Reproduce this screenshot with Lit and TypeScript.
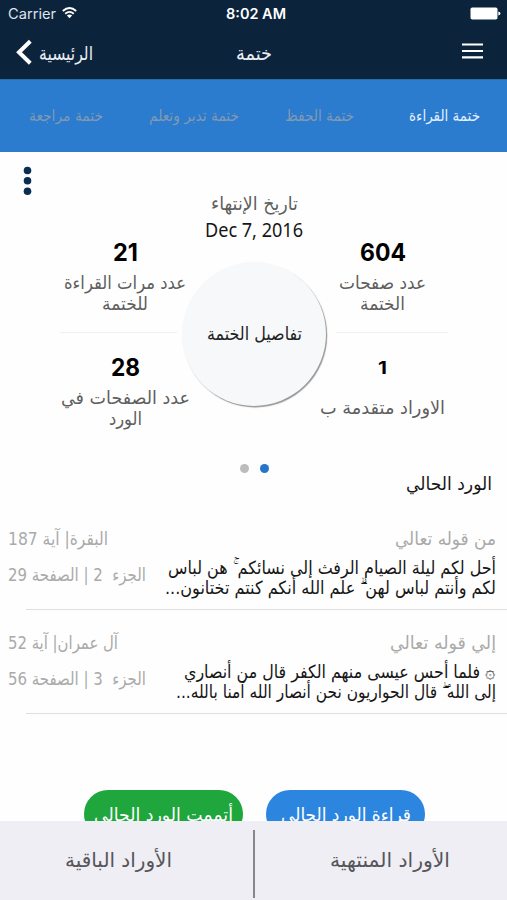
import { LitElement, html, css, svg } from "lit";
import { customElement, property } from "lit/decorators.js";

/* One line of text set to an exact width. Box is 20px high, baseline at 15px. */
@customElement("fit-line")
class FitLine extends LitElement {
  @property() text = "";
  @property({ type: Number }) w = 100;
  static styles = css`
    :host { display: block; flex: none; height: 20px; }
    svg { display: block; overflow: visible; }
    text { fill: currentColor; white-space: pre; }
  `;
  render() {
    const rtl = /[\u0600-\u06ff]/.test(this.text);
    return html`<svg width=${this.w} height="20">${svg`<text x=${this.w / 2} y="15" text-anchor="middle"
      direction=${rtl ? "rtl" : "ltr"} textLength=${this.w} lengthAdjust="spacingAndGlyphs">${this.text}</text>`}</svg>`;
  }
}

const line = (text: string, w: number, cls = "") =>
  html`<fit-line class=${cls} .text=${text} .w=${w}></fit-line>`;

interface Passage {
  label: [string, number];
  verse: [string, number];
  body: [string, number][];
  place: [string, number];
}

const passages: Passage[] = [
  {
    label: ["من قوله تعالي", 101],
    verse: ["البقرة| آية 187", 100],
    body: [
      ["أحل لكم ليلة الصيام الرفث إلى نسائكم ۚ هن لباس", 328],
      ["لكم وأنتم لباس لهن ۗ علم الله أنكم كنتم تختانون...", 331],
    ],
    place: ["الجزء  2 | الصفحة 29", 138],
  },
  {
    label: ["إلي قوله تعالي", 106],
    verse: ["آل عمران| آية 52", 110],
    body: [
      ["۞ فلما أحس عيسى منهم الكفر قال من أنصاري", 312],
      ["إلى الله ۖ قال الحواريون نحن أنصار الله آمنا بالله...", 320],
    ],
    place: ["الجزء  3 | الصفحة 56", 138],
  },
];

@customElement("app-root")
class AppRoot extends LitElement {
  static styles = css`
    :host {
      display: flex; flex-direction: column; width: 507px; height: 900px; overflow: hidden;
      background: #fefefe; color: #161616;
      font: 18px "DejaVu Sans Condensed", "DejaVu Sans", sans-serif;
    }
    * { box-sizing: border-box; }
    .top { height: 79px; background: #0c233c; color: #fff; flex: none; }
    .status { display: grid; grid-template-columns: 1fr auto 1fr; padding: 4px 4px 0 8px; height: 28px; font: 14px Inter, sans-serif; }
    .carrier { display: flex; gap: 6px; color: #dfe5ec; }
    .wifi { margin-top: 3px; }
    .clock { font-weight: 600; }
    .battery { justify-self: end; margin-top: 2px; }
    .nav { display: grid; grid-template-columns: 1fr auto 1fr; padding: 10px 24px 0 15px; color: #e9eef5; font-size: 19px; }
    .back { display: flex; gap: 7px; }
    .back fit-line, .title { margin-top: 7px; }
    .title { margin-left: 9px; }
    .menu { justify-self: end; margin-top: 4px; }
    .tabs { height: 73px; background: #2b7bce; border-top: 1px solid #2b6bad; padding: 26px 27px 0 28px; display: flex; gap: 46px; direction: rtl; color: #8199b2; font-size: 15.5px; flex: none; }
    .tabs .on { color: #e3f0ff; margin-inline-end: 9px; }
    .summary { height: 322px; position: relative; display: grid; grid-template-columns: 130px 128px 125px; padding: 43px 0 0 60px; flex: none; }
    .dots { position: absolute; left: 23px; top: 14px; }
    .col { display: flex; flex-direction: column; align-items: center; color: #5f5f5f; }
    .num { color: #000; font: 700 24px Inter, sans-serif; }
    .one { font-size: 17px; }
    .col .top-num { margin-top: 51px; }
    .l1 { margin-top: 8px; }
    .l2 { margin-top: 1px; }
    .rule { height: 1px; background: #f0f0f0; margin: 17px 0 0; width: 117px; align-self: flex-start; }
    .right { margin-left: 2px; width: 125px; }
    .right .rule { width: 112px; margin-left: 16px; }
    .left .low { margin-top: 28px; }
    .right .low { margin-top: 26px; }
    .right .advance { margin-top: 20px; }
    .mid { font-size: 19px; }
    .date { margin-top: 7px; color: #161616; font: 19px "Noto Sans", sans-serif; }
    .disc { width: 144px; height: 144px; border-radius: 50%; background: #f7f8fa; box-shadow: 1.2px 1.4px 1px #999; margin: 20px 0 0; display: flex; justify-content: center; padding-top: 63px; color: #222; font-size: 18px; flex: none; }
    .pager { height: 0; display: flex; justify-content: center; gap: 11px; padding-left: 1px; }
    .pager i { width: 9px; height: 9px; border-radius: 50%; background: #bcbcbc; margin-top: -10.5px; flex: none; }
    .pager i.on { background: #2575cb; }
    .heading { display: flex; justify-content: flex-end; margin: 1px 15px 0 0; }
    .list { margin-top: 35px; }
    .row { height: 104px; padding: 0 11px 0 8px; display: grid; grid-template-columns: 138px 1fr; grid-template-rows: 89px 1px; color: #aaa; }
    .row::after { content: ""; height: 1px; background: #dfdfdf; margin: -10px -11px 0 18px; grid-column: 1 / 3; }
    .right-side { display: flex; flex-direction: column; align-items: flex-end; }
    .place { margin-top: 16px; }
    .b0 { margin-top: 9px; color: #161616; }
    .b1 { margin-top: 0; color: #161616; }
    .actions { display: flex; gap: 23px; padding-left: 84px; margin-top: 52px; height: 31px; overflow: hidden; color: #fff; flex: none; }
    .pill { width: 159px; height: 48px; border-radius: 24px; padding-top: 16px; display: flex; justify-content: center; background: #2c86e0; flex: none; }
    .green { background: #1fa63c; }
    .foot { flex: 1; background: #efeef4; color: #55555b; font-size: 20px; display: flex; }
    .left-foot { margin: 31px 81px 0 65px; }
    .bar { width: 2px; height: 68px; margin-top: 9px; background: #88888c; }
    .right-foot { margin: 31px 0 0 75px; }
  `;

  render() {
    return html`
      <header class="top">
        <div class="status">
          <div class="carrier">${line("Carrier", 48)}
            <svg class="wifi" width="15" height="12" viewBox="0 0 15 12" fill="none" stroke="#fff" stroke-width="1.8">
              <path d="M.8 4Q7.5-2 14.2 4M3.2 6.7Q7.5 3 11.8 6.7" />
              <path d="M4.9 8.6Q7.5 6.5 10.1 8.6L7.5 11.3Z" fill="#fff" stroke="none" />
            </svg>
          </div>
          ${line("8:02 AM", 60, "clock")}
          <svg class="battery" width="33" height="14" viewBox="0 0 33 14" fill="#fff">
            <rect x=".5" y="1.5" width="27" height="12" rx="1.8" />
            <path d="M28.3 5.5Q30.5 6 30.5 7.5T28.3 9.5Z" />
          </svg>
        </div>
        <div class="nav">
          <div class="back">
            <svg width="17" height="28" viewBox="0 0 17 28" fill="none" stroke="#fff" stroke-width="4"><path d="M15.3 3.2 4 14.3 15.3 25.2" /></svg>
            ${line("الرئيسية", 54)}
          </div>
          ${line("ختمة", 36, "title")}
          <svg class="menu" width="21" height="18" viewBox="0 0 21 18" stroke="#fff" stroke-width="2.2"><path d="M0 2.5H21M0 9H21M0 15.3H21" /></svg>
        </div>
      </header>
      <nav class="tabs">
        ${line("ختمة القراءة", 71, "on")}
        ${line("ختمة الحفظ", 69)}
        ${line("ختمة تدبر وتعلم", 90)}
        ${line("ختمة مراجعة", 74)}
      </nav>
      <section class="summary">
        <svg class="dots" width="9" height="30" fill="#0b2d50"><circle cx="4.5" cy="4.5" r="3.8" /><circle cx="4.5" cy="14.8" r="3.8" /><circle cx="4.5" cy="25.2" r="3.8" /></svg>
        <div class="col left">
          ${line("21", 25, "num top-num")}
          ${line("عدد مرات القراءة", 122, "l1")}
          ${line("للختمة", 46, "l2")}
          <div class="rule"></div>
          ${line("28", 29, "num low")}
          ${line("عدد الصفحات في", 129, "l1")}
          ${line("الورد", 33, "l2")}
        </div>
        <div class="col mid">
          ${line("تاريخ الإنتهاء", 87)}
          ${line("Dec 7, 2016", 98, "date")}
          <div class="disc">${line("تفاصيل الختمة", 95)}</div>
        </div>
        <div class="col right">
          ${line("604", 46, "num top-num")}
          ${line("عدد صفحات", 87, "l1")}
          ${line("الختمة", 45, "l2")}
          <div class="rule"></div>
          ${line("1", 9, "num one low")}
          ${line("الاوراد متقدمة ب", 125, "advance")}
        </div>
      </section>
      <div class="pager"><i></i><i class="on"></i></div>
      <div class="heading">${line("الورد الحالي", 86)}</div>
      <section class="list">
        ${passages.map((p) => html`
          <article class="row">
            <div>${line(...p.verse)}${line(...p.place, "place")}</div>
            <div class="right-side">
              ${line(...p.label)}
              ${p.body.map((b, i) => line(b[0], b[1], "b" + i))}
            </div>
          </article>`)}
      </section>
      <div class="actions">
        <div class="pill green">${line("أتممت الورد الحالي", 139)}</div>
        <div class="pill">${line("قراءة الورد الحالي", 130)}</div>
      </div>
      <footer class="foot">
        ${line("الأوراد الباقية", 107, "left-foot")}
        <div class="bar"></div>
        ${line("الأوراد المنتهية", 120, "right-foot")}
      </footer>
    `;
  }
}
